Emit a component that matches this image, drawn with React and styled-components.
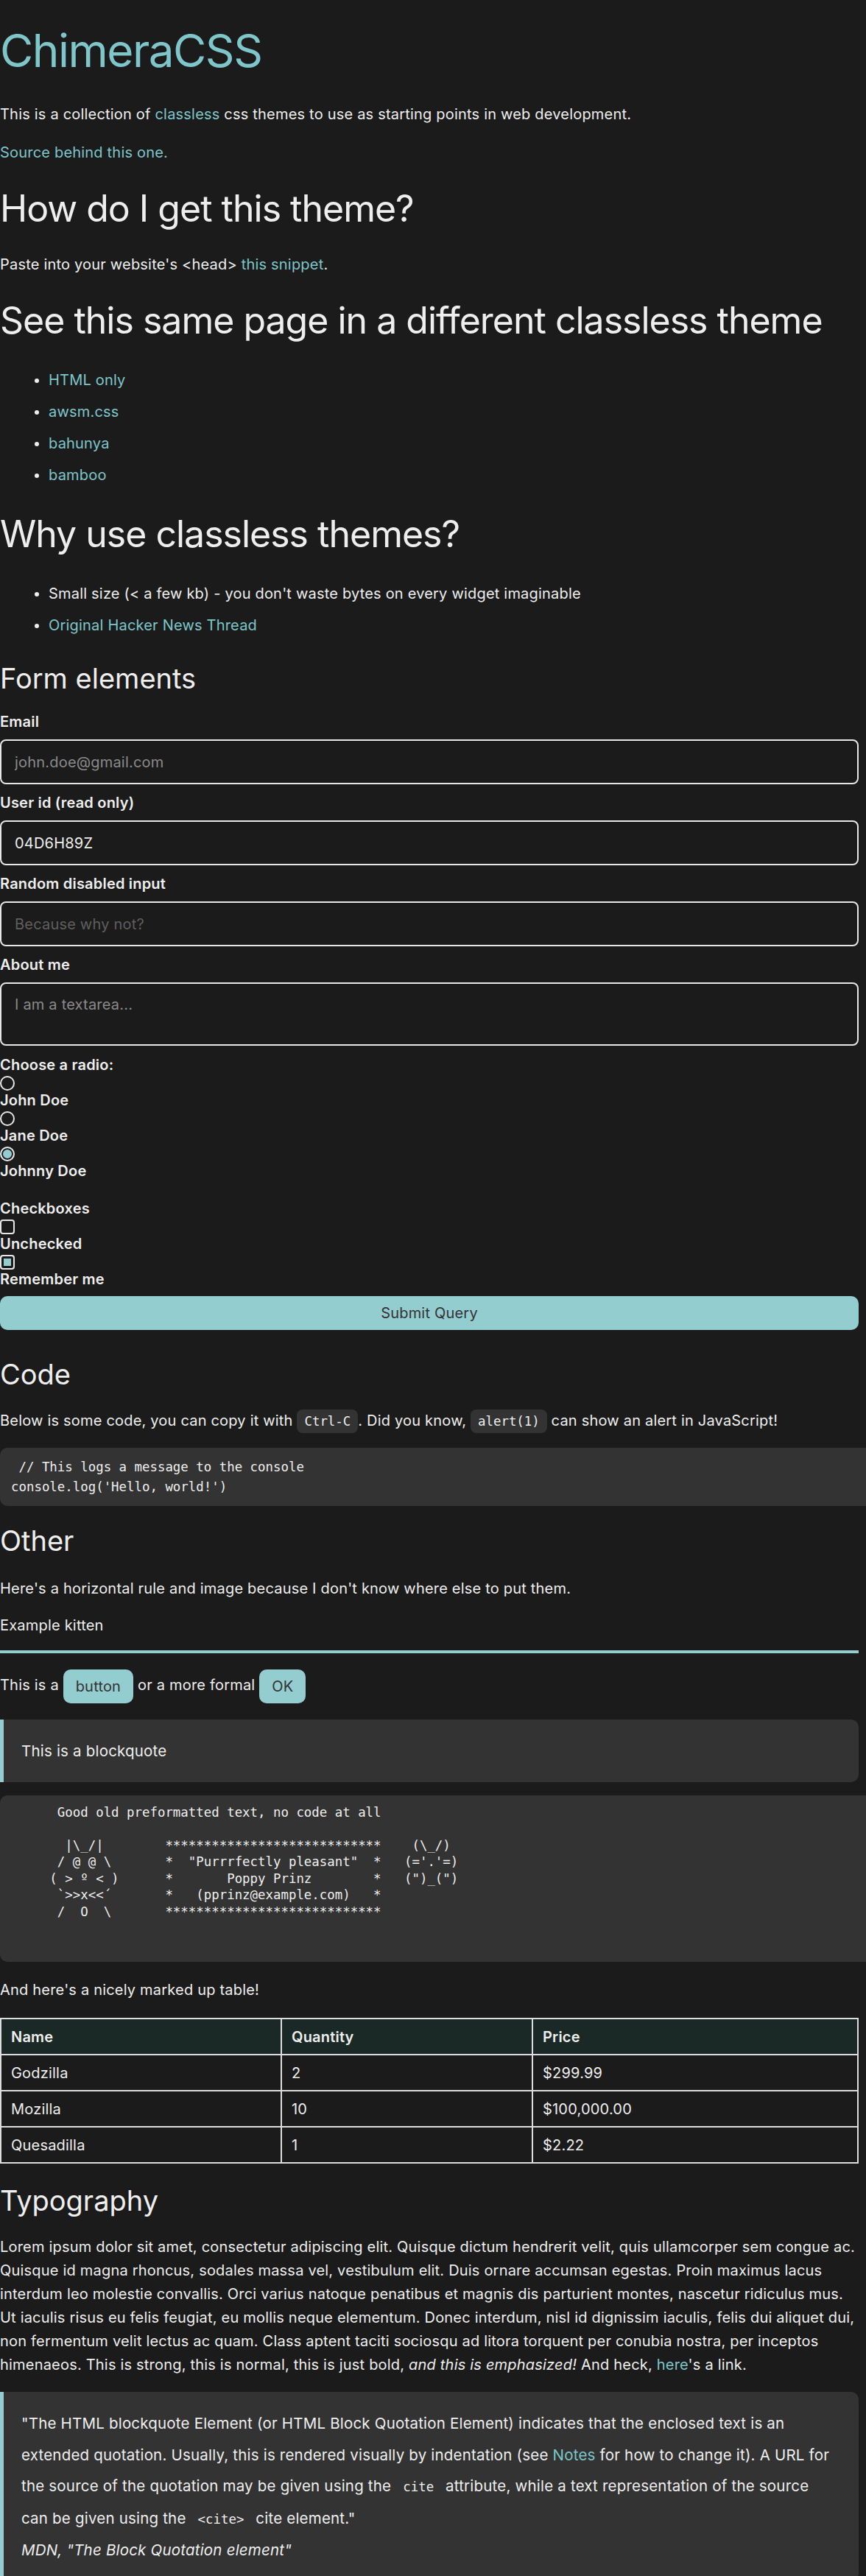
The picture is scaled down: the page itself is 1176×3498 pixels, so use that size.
import styled, { createGlobalStyle } from 'styled-components';

const accent = '#7ec6ca';
const soft = '#94cdd0';
const panel = '#333333';
const mono = '"DejaVu Sans Mono", "Liberation Mono", monospace';

const GlobalStyle = createGlobalStyle`
    html, body {
        overflow-x: hidden;
    }
    body {
        margin: 0;
        background: #1b1b1b;
        color: #eeeeee;
        font-family: Inter, "Noto Sans", sans-serif;
        font-size: 20px;
        line-height: 32px;
        letter-spacing: 0.2px;
    }
`

const Page = styled.main`
    width: 1166px;
    padding-bottom: 40px;
`

const Title = styled.h1`
    margin: 30px 0 32px;
    font-size: 62px;
    line-height: 77px;
    font-weight: 400;
    letter-spacing: -1.5px;
    color: ${accent};
`

const Heading = styled.h2`
    margin: ${p => p.$small ? '24px 0' : '29px 0'};
    font-size: ${p => p.$small ? '38px' : '50px'};
    line-height: ${p => p.$small ? '46px' : '62px'};
    letter-spacing: ${p => p.$small ? '0' : '-1px'};
    font-weight: 400;
`

const Para = styled.p`
    margin: ${p => p.$m || '20px 0'};
`

const Link = styled.a`
    color: ${accent};
    text-decoration: none;
`

const List = styled.ul`
    margin: 34px 0 33px;
    padding-left: 66px;
    display: flex;
    flex-direction: column;
    gap: 11px;
`

const Form = styled.form`
    margin-bottom: 37px;
`

const FieldLabel = styled.label`
    display: block;
    font-weight: 600;
    line-height: 24px;
    margin-top: ${p => p.$gap || '0'};
`

const TextInput = styled.input`
    display: block;
    box-sizing: border-box;
    width: 100%;
    height: 61px;
    margin: 12px 0 13px;
    padding: 0 18px;
    background: transparent;
    border: 2px solid #e6e6e6;
    border-radius: 8px;
    color: #eeeeee;
    font: inherit;
    letter-spacing: inherit;
    outline: none;

    &::placeholder {
        color: #8a8a8a;
    }
    &:disabled::placeholder {
        color: #5f5f5f;
    }
`

const TextArea = styled.textarea`
    display: block;
    box-sizing: border-box;
    width: 100%;
    height: 86px;
    margin: 12px 0 14px;
    padding: 15px 18px;
    background: transparent;
    border: 2px solid #e6e6e6;
    border-radius: 8px;
    color: #eeeeee;
    font: inherit;
    letter-spacing: inherit;
    line-height: 26px;
    resize: none;

    &::placeholder {
        color: #8a8a8a;
    }
`

const Choice = styled.input`
    appearance: none;
    display: block;
    box-sizing: border-box;
    width: 20px;
    height: 20px;
    margin: 3px 0 1px;
    border: 2px solid #e6e6e6;
    border-radius: ${p => p.type === 'radio' ? '50%' : '4px'};
    background: transparent;

    &:checked {
        background: ${soft};
        box-shadow: inset 0 0 0 ${p => p.type === 'radio' ? '2px' : '3px'} #1b1b1b;
    }
`

const Submit = styled.button`
    display: block;
    width: 100%;
    height: 46px;
    margin-top: 11px;
    border: none;
    border-radius: 10px;
    background: ${soft};
    color: #333333;
    font: inherit;
    letter-spacing: inherit;
`

const InlineCode = styled.code`
    font-family: ${mono};
    font-size: 17.4px;
    letter-spacing: 0;
    padding: 6px 10px;
    border-radius: 8px;
    background: ${panel};
`

const CodeBlock = styled.pre`
    width: 100%;
    margin: ${p => p.$m || '20px 0'};
    padding: ${p => p.$pad || '12.5px 15px'};
    background: ${panel};
    border-radius: 10px;
    font-family: ${mono};
    font-size: 17.4px;
    letter-spacing: 0;
    line-height: ${p => p.$lh || '27px'};
    white-space: pre;
`

const Caption = styled.div`
    margin-top: 18px;
`

const Rule = styled.hr`
    height: 4px;
    margin: 18px 0 22px;
    border: none;
    background: ${soft};
`

const Button = styled.button`
    height: 46px;
    padding: 0 17px;
    border: none;
    border-radius: 10px;
    background: ${soft};
    color: #333333;
    font: inherit;
    letter-spacing: inherit;
    vertical-align: middle;
`

const Quote = styled.blockquote`
    margin: ${p => p.$m || '22px 0 18px'};
    padding: 22px 27px 20px 24px;
    border-left: 5px solid ${soft};
    border-radius: 0 10px 10px 0;
    background: ${panel};
    font-size: 20.5px;
    line-height: 42.5px;

    p {
        margin: 0;
    }
`

const Cite = styled.cite`
    display: block;
`

const Table = styled.table`
    width: 100%;
    margin: 22px 0 27px;
    table-layout: fixed;
    border-collapse: collapse;
    border: 2px solid #dddddd;
`

const HeadCell = styled.th`
    padding: 7.5px 13px;
    border: 2px solid #dddddd;
    background: #1a2826;
    text-align: left;
    font-weight: 600;
`

const Cell = styled.td`
    padding: 7.5px 13px;
    border: 2px solid #dddddd;
`

const Plain = styled.strong`
    font-weight: 400;
`

const art = `      Good old preformatted text, no code at all

       |\\_/|        ****************************    (\\_/)
      / @ @ \\       *  "Purrrfectly pleasant"  *   (='.'=)
     ( > º < )      *       Poppy Prinz        *   (")_(")
      \`>>x<<´       *   (pprinz@example.com)   *
      /  O  \\       ****************************`;

const rows = [
    ['Godzilla', '2', '$299.99'],
    ['Mozilla', '10', '$100,000.00'],
    ['Quesadilla', '1', '$2.22'],
];

export default function App() {
    return (
        <Page>
            <GlobalStyle />
            <Title>ChimeraCSS</Title>
            <Para $m="32px 0 20px">This is a collection of <Link href="#">classless</Link> css themes to use as starting points in web development.</Para>
            <Para><Link href="#">Source behind this one.</Link></Para>

            <Heading>How do I get this theme?</Heading>
            <Para>Paste into your website's &lt;head&gt; <Link href="#">this snippet</Link>.</Para>

            <Heading>See this same page in a different classless theme</Heading>
            <List>
                <li><Link href="#">HTML only</Link></li>
                <li><Link href="#">awsm.css</Link></li>
                <li><Link href="#">bahunya</Link></li>
                <li><Link href="#">bamboo</Link></li>
            </List>

            <Heading>Why use classless themes?</Heading>
            <List>
                <li>Small size (&lt; a few kb) - you don't waste bytes on every widget imaginable</li>
                <li><Link href="#">Original Hacker News Thread</Link></li>
            </List>

            <Heading $small>Form elements</Heading>
            <Form onSubmit={e => e.preventDefault()}>
                <FieldLabel htmlFor="email">Email</FieldLabel>
                <TextInput id="email" type="email" placeholder="john.doe@gmail.com" />
                <FieldLabel htmlFor="uid">User id (read only)</FieldLabel>
                <TextInput id="uid" readOnly defaultValue="04D6H89Z" />
                <FieldLabel htmlFor="dis">Random disabled input</FieldLabel>
                <TextInput id="dis" disabled placeholder="Because why not?" />
                <FieldLabel htmlFor="about">About me</FieldLabel>
                <TextArea id="about" placeholder="I am a textarea..." />

                <FieldLabel>Choose a radio:</FieldLabel>
                <Choice type="radio" name="who" id="r1" />
                <FieldLabel htmlFor="r1">John Doe</FieldLabel>
                <Choice type="radio" name="who" id="r2" />
                <FieldLabel htmlFor="r2">Jane Doe</FieldLabel>
                <Choice type="radio" name="who" id="r3" defaultChecked />
                <FieldLabel htmlFor="r3">Johnny Doe</FieldLabel>

                <FieldLabel $gap="27px">Checkboxes</FieldLabel>
                <Choice type="checkbox" id="c1" />
                <FieldLabel htmlFor="c1">Unchecked</FieldLabel>
                <Choice type="checkbox" id="c2" defaultChecked />
                <FieldLabel htmlFor="c2">Remember me</FieldLabel>

                <Submit type="submit">Submit Query</Submit>
            </Form>

            <Heading $small>Code</Heading>
            <Para $m="24px 0 20px">Below is some code, you can copy it with <InlineCode>Ctrl-C</InlineCode>. Did you know, <InlineCode>alert(1)</InlineCode> can show an alert in JavaScript!</Para>
            <CodeBlock>{` // This logs a message to the console
console.log('Hello, world!')`}</CodeBlock>

            <Heading $small>Other</Heading>
            <Para $m="26px 0 0">Here's a horizontal rule and image because I don't know where else to put them.</Para>
            <Caption>Example kitten</Caption>
            <Rule />
            <Para $m="22px 0 0">This is a <Button type="button">button</Button> or a more formal <Button type="button">OK</Button></Para>

            <Quote><p>This is a blockquote</p></Quote>

            <CodeBlock $m="18px 0 22px" $pad="12px 15px 57px" $lh="22.5px">{art}</CodeBlock>

            <Para $m="22px 0">And here's a nicely marked up table!</Para>
            <Table>
                <colgroup>
                    <col style={{ width: 381 }} />
                    <col style={{ width: 341 }} />
                    <col />
                </colgroup>
                <thead>
                    <tr>
                        <HeadCell>Name</HeadCell>
                        <HeadCell>Quantity</HeadCell>
                        <HeadCell>Price</HeadCell>
                    </tr>
                </thead>
                <tbody>
                    {rows.map(r => (
                        <tr key={r[0]}>
                            {r.map((c, i) => <Cell key={i}>{c}</Cell>)}
                        </tr>
                    ))}
                </tbody>
            </Table>

            <Heading $small>Typography</Heading>
            <Para $m="23px 0 21px">Lorem ipsum dolor sit amet, consectetur adipiscing elit. Quisque dictum hendrerit velit, quis ullamcorper sem congue ac. Quisque id magna rhoncus, sodales massa vel, vestibulum elit. Duis ornare accumsan egestas. Proin maximus lacus interdum leo molestie convallis. Orci varius natoque penatibus et magnis dis parturient montes, nascetur ridiculus mus. Ut iaculis risus eu felis feugiat, eu mollis neque elementum. Donec interdum, nisl id dignissim iaculis, felis dui aliquet dui, non fermentum velit lectus ac quam. Class aptent taciti sociosqu ad litora torquent per conubia nostra, per inceptos himenaeos. <Plain>This is strong</Plain>, this is normal, <Plain as="b">this is just bold</Plain>, <em>and this is emphasized!</em> And heck, <Link href="#">here</Link>'s a link.</Para>

            <Quote $m="21px 0 0">
                <p>"The HTML blockquote Element (or HTML Block Quotation Element) indicates that the enclosed text is an extended quotation. Usually, this is rendered visually by indentation (see <Link href="#">Notes</Link> for how to change it). A URL for the source of the quotation may be given using the <InlineCode>cite</InlineCode> attribute, while a text representation of the source can be given using the <InlineCode>&lt;cite&gt;</InlineCode> cite element."</p>
                <Cite>MDN, "The Block Quotation element"</Cite>
            </Quote>
        </Page>
    )
}
